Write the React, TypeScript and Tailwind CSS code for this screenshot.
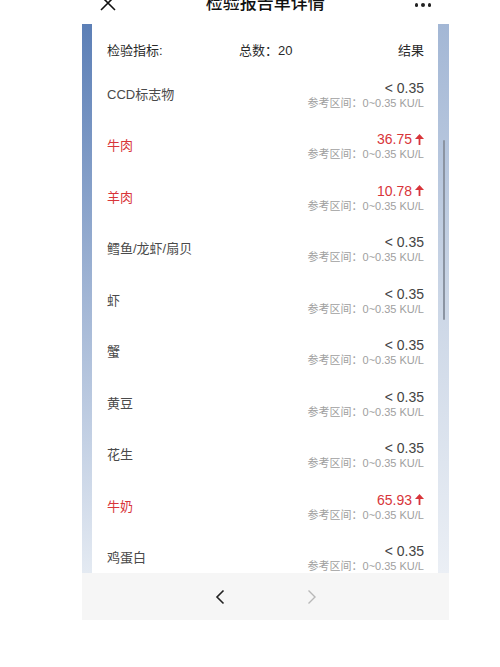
import React from "react";

type Row = { name: string; value: string; high?: boolean };

const rows: Row[] = [
  { name: "CCD标志物", value: "< 0.35" },
  { name: "牛肉", value: "36.75", high: true },
  { name: "羊肉", value: "10.78", high: true },
  { name: "鳕鱼/龙虾/扇贝", value: "< 0.35" },
  { name: "虾", value: "< 0.35" },
  { name: "蟹", value: "< 0.35" },
  { name: "黄豆", value: "< 0.35" },
  { name: "花生", value: "< 0.35" },
  { name: "牛奶", value: "65.93", high: true },
  { name: "鸡蛋白", value: "< 0.35" },
];

function UpArrow() {
  return (
    <svg width="9" height="11" viewBox="0 0 9 11" className="ml-[3px]">
      <polygon points="4.5,0 9,5 0,5" fill="#d8353a" />
      <rect x="3.6" y="4" width="1.8" height="7" fill="#d8353a" />
    </svg>
  );
}

export default function App() {
  return (
    <div
      className="w-[500px] h-[667px] bg-white overflow-hidden"
      style={{ fontFamily: '"Liberation Sans", "Noto Sans CJK SC", sans-serif' }}
    >
      <div className="ml-[82px] w-[367px]">
        {/* top bar */}
        <div className="h-[24px] flex items-start justify-between">
          <svg width="16" height="16" viewBox="0 0 16 16" className="ml-[18px] -mt-[5px]">
            <path d="M1 1 L15 15 M15 1 L1 15" stroke="#111" strokeWidth="1.6" fill="none" />
          </svg>
          <div className="-mt-[7px] text-[17px] leading-[22px] text-[#111] font-medium">检验报告单详情</div>
          <div className="mr-[18px] mt-[3px] flex gap-[3px]">
            <span className="w-[3.5px] h-[3.5px] rounded-full bg-[#222]" />
            <span className="w-[3.5px] h-[3.5px] rounded-full bg-[#222]" />
            <span className="w-[3.5px] h-[3.5px] rounded-full bg-[#222]" />
          </div>
        </div>

        {/* content */}
        <div className="relative flex h-[549px] overflow-hidden">
          <div className="w-[10px] bg-gradient-to-b from-[#5c7fb6] via-[#a2b6d5] to-[#e4eaf2]" />
          <div className="flex-1 bg-white pl-[15px] pr-[14px]">
            <div className="h-[45px] pt-[18px] flex text-[13px] leading-[18px] text-[#2a2a2a]">
              <div className="w-[132px]">检验指标:</div>
              <div>总数：20</div>
              <div className="flex-1 text-right">结果</div>
            </div>
            {rows.map((r) => (
              <div key={r.name} className="h-[51.5px] flex items-center justify-between">
                <div className={`text-[13px] leading-[18px] ${r.high ? "text-[#d8353a]" : "text-[#4a4a4a]"}`}>
                  {r.name}
                </div>
                <div className="flex flex-col items-end">
                  <div
                    className={`flex items-center text-[14px] leading-[16px] ${r.high ? "text-[#d8353a]" : "text-[#444]"}`}
                  >
                    <span>{r.value}</span>
                    {r.high && <UpArrow />}
                  </div>
                  <div className="text-[11px] leading-[13px] text-[#a0a0a0] mt-[1px]">参考区间：0~0.35 KU/L</div>
                </div>
              </div>
            ))}
          </div>
          <div className="w-[11px] bg-gradient-to-b from-[#a3b7d5] via-[#cbd6e6] to-[#ebeff5]" />
          <div className="absolute left-[361px] top-[116px] w-[2px] h-[180px] rounded-full bg-[#8b94a2]" />
        </div>

        {/* bottom nav */}
        <div className="h-[47px] bg-[#f6f6f6] flex items-center justify-center gap-[82px]">
          <svg width="10" height="16" viewBox="0 0 10 16">
            <path d="M8.5 1.5 L2 8 L8.5 14.5" stroke="#222" strokeWidth="1.6" fill="none" />
          </svg>
          <svg width="10" height="16" viewBox="0 0 10 16">
            <path d="M1.5 1.5 L8 8 L1.5 14.5" stroke="#b8b8b8" strokeWidth="1.4" fill="none" />
          </svg>
        </div>
      </div>
    </div>
  );
}
